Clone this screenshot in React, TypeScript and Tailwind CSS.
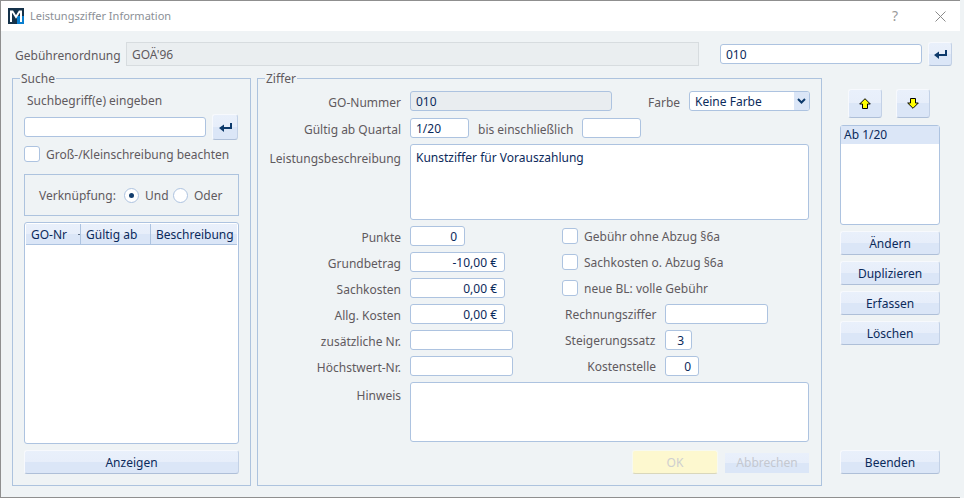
import React from "react";

const btnBg = "bg-[linear-gradient(to_bottom,#e9f0fb_0%,#e7eefa_50%,#dbe6f7_50%,#dbe6f7_100%)]";
const btn = `flex items-center justify-center rounded-[3px] border border-[#f7f9fd] border-b-[#aebfd8] border-r-[#c3d1e6] ${btnBg} text-[#0b2a5b]`;
const tbtn = `${btn} pt-[2px]`;
const box = "rounded-[3px] border border-[#adc3e0] bg-white text-[#0b2a5b] flex items-center";
const input = `${box} pt-[2px]`;
const label = "text-[#5f5a5e]";
const lbl = `${label} pt-[2px]`;
const lbl2 = `${label} pt-[4px]`;

function Logo() {
  return (
    <svg width="17" height="17" viewBox="0 0 17 17">
      <rect x="0" y="0" width="16" height="16" fill="#15324a" />
      <rect x="9" y="8" width="7" height="8" fill="#0a7fcf" />
      <path d="M3 14V3.5h1.5L8 9l3.5-5.5H13V14" fill="none" stroke="#fff" strokeWidth="2" />
    </svg>
  );
}

function Enter() {
  return (
    <svg width="13" height="9" viewBox="0 0 13 9">
      <path d="M11 0h2v6H5v3L0 5l5-3.5V4h6z" fill="#0d3a6b" />
    </svg>
  );
}

function Arrow({ up }: { up?: boolean }) {
  return (
    <svg width="12" height="11" viewBox="0 0 12 11" className={up ? "" : "rotate-180"}>
      <path d="M6 .7l5.3 5.3H8.5v4.5h-5V6H.7z" fill="#ffff00" stroke="#000" strokeWidth="1" strokeLinejoin="miter" />
    </svg>
  );
}

function Chevron() {
  return (
    <svg width="9" height="6" viewBox="0 0 9 6">
      <path d="M1 1l3.5 3.5L8 1" fill="none" stroke="#0d3a6b" strokeWidth="2" />
    </svg>
  );
}

function Check({ text }: { text: string }) {
  return (
    <div className="flex h-[16px] items-center">
      <span className="h-[16px] w-[16px] rounded-[3px] border border-[#adc3e0] bg-white" />
      <span className={`ml-[6px] ${lbl}`}>{text}</span>
    </div>
  );
}

function Row({ name, children, top = 6 }: { name: string; children?: React.ReactNode; top?: number }) {
  return (
    <div className="flex h-[20px] items-center" style={{ marginTop: top }}>
      <span className={`w-[143px] shrink-0 text-right ${lbl2}`}>{name}</span>
      <div className="ml-[9px] flex items-center">{children}</div>
    </div>
  );
}

function Num({ w, children }: { w: number; children?: React.ReactNode }) {
  return (
    <div className={`${input} h-[20px] justify-end pr-[7px]`} style={{ width: w }}>
      {children}
    </div>
  );
}

function Legend({ children }: { children: React.ReactNode }) {
  return <span className={`absolute left-[7px] top-[-6px] bg-[#eff3f5] px-[1px] leading-[12px] ${label}`}>{children}</span>;
}

export default function App() {
  return (
    <div className="h-[498px] w-[964px] overflow-hidden bg-[#eff3f5] font-['Noto_Sans',sans-serif] text-[12px] leading-[16px]">
      <div className="flex h-[498px] w-[960px] flex-col border-l border-t border-b border-[#8f8f8f] bg-[#eff3f5]">
        <div className="flex h-[30px] shrink-0 items-center bg-white pl-[7px]">
          <Logo />
          <span className="ml-[5px] text-[11px] text-[#8b8f96]">Leistungsziffer Information</span>
          <span className="ml-auto text-[14px] text-[#9a9a9a]">?</span>
          <svg width="11" height="11" viewBox="0 0 11 11" className="ml-[37px] mr-[14px]">
            <path d="M.5.5l10 10M10.5.5l-10 10" stroke="#8a8a8a" fill="none" />
          </svg>
        </div>

        <div className="mt-[11px] flex h-[24px] shrink-0 items-center pl-[14px]">
          <span className={`w-[111px] ${lbl2}`}>Gebührenordnung</span>
          <div className="flex h-[24px] w-[573px] items-center border border-[#d7dcdf] bg-[#eaeef0] pl-[5px] pt-[2px] text-[#5f5a5e]">GOÄ'96</div>
          <div className={`${input} ml-[21px] h-[20px] w-[202px] pl-[5px]`}>010</div>
          <div className={`${btn} ml-[6px] h-[24px] w-[24px]`}><Enter /></div>
        </div>

        <div className="mt-[12px] flex flex-1 pl-[11px]">
          <div className="relative flex h-[408px] w-[239px] flex-col border border-[#adc3de] pl-[11px] pr-[11px]">
            <Legend>Suche</Legend>
            <span className={`ml-[3px] mt-[14px] ${label}`}>Suchbegriff(e) eingeben</span>
            <div className="mt-[5px] flex items-center">
              <div className={`${input} h-[20px] w-[182px]`} />
              <div className={`${btn} ml-[6px] h-[26px] w-[26px]`}><Enter /></div>
            </div>
            <div className="mt-[6px]"><Check text="Groß-/Kleinschreibung beachten" /></div>
            <div className="mt-[12px] flex h-[42px] w-[215px] shrink-0 items-center border border-[#adc3de] pl-[14px]">
              <span className={`w-[85px] shrink-0 ${lbl}`}>Verknüpfung:</span>
              <span className="flex h-[15px] w-[15px] shrink-0 items-center justify-center rounded-full border border-[#adc3e0] bg-white">
                <span className="h-[5px] w-[5px] rounded-full bg-[#123e6e]" />
              </span>
              <span className={`ml-[6px] w-[22px] shrink-0 ${lbl}`}>Und</span>
              <span className="ml-[6px] h-[15px] w-[15px] shrink-0 rounded-full border border-[#adc3e0] bg-white" />
              <span className={`ml-[6px] ${lbl}`}>Oder</span>
            </div>
            <div className="mt-[6px] flex h-[222px] w-[215px] shrink-0 flex-col rounded-[3px] border border-[#adc3e0] bg-white px-[1px] pt-[1px]">
              <div className={`flex h-[21px] border-b border-[#adc3e0] text-[#0b2a5b] ${btnBg}`}>
                <span className="relative w-[55px] border-r border-[#adc3e0] pl-[5px] leading-[21px]">
                  GO-Nr
                  <span className="absolute right-0 top-[10px] h-[1px] w-[2px] bg-[#5f6f85]" />
                </span>
                <span className="w-[70px] border-r border-[#adc3e0] pl-[5px] leading-[21px]">Gültig ab</span>
                <span className="flex-1 pl-[5px] leading-[21px]">Beschreibung</span>
              </div>
            </div>
            <div className={`${tbtn} mt-[6px] h-[24px] w-[215px]`}>Anzeigen</div>
          </div>

          <div className="relative ml-[6px] flex h-[408px] w-[565px] flex-col border border-[#adc3de] pr-[12px]">
            <Legend>Ziffer</Legend>
            <Row name="GO-Nummer" top={12}>
              <div className="flex h-[20px] w-[202px] items-center rounded-[3px] border border-[#adc3e0] bg-[#e9edf0] pl-[5px] pt-[2px] text-[#0b2a5b]">010</div>
              <span className={`ml-[36px] ${lbl2}`}>Farbe</span>
              <div className={`${input} ml-[9px] h-[20px] w-[121px] pl-[5px]`}>
                Keine Farbe
                <span className="-mt-[2px] ml-auto flex h-[18px] w-[15px] items-center justify-center rounded-r-[2px] bg-[#dbe6f7]"><Chevron /></span>
              </div>
            </Row>
            <Row name="Gültig ab Quartal" top={7}>
              <div className={`${input} h-[20px] w-[59px] pl-[5px]`}>1/20</div>
              <span className={`ml-[9px] w-[104px] ${lbl2}`}>bis einschließlich</span>
              <div className={`${input} h-[20px] w-[59px]`} />
            </Row>
            <div className="mt-[6px] flex h-[76px]">
              <span className={`w-[143px] shrink-0 pt-[7px] text-right ${label}`}>Leistungsbeschreibung</span>
              <div className="ml-[9px] h-[76px] w-[400px] rounded-[3px] border border-[#adc3e0] bg-white px-[5px] pt-[5px] text-[#0b2a5b]">Kunstziffer für Vorauszahlung</div>
            </div>

            <div className="flex">
              <div className="flex w-[304px] shrink-0 flex-col">
                <Row name="Punkte"><Num w={55}>0</Num></Row>
                <Row name="Grundbetrag"><Num w={95}>-10,00 €</Num></Row>
                <Row name="Sachkosten"><Num w={95}>0,00 €</Num></Row>
                <Row name="Allg. Kosten"><Num w={95}>0,00 €</Num></Row>
                <Row name="zusätzliche Nr."><Num w={103} /></Row>
                <Row name="Höchstwert-Nr."><Num w={103} /></Row>
              </div>
              <div className="flex flex-col pt-[8px]">
                <Check text="Gebühr ohne Abzug §6a" />
                <div className="mt-[10px]"><Check text="Sachkosten o. Abzug §6a" /></div>
                <div className="mt-[10px]"><Check text="neue BL: volle Gebühr" /></div>
                <div className="mt-[8px] flex h-[20px] items-center">
                  <span className={`ml-[3px] w-[100px] ${lbl}`}>Rechnungsziffer</span>
                  <div className={`${input} h-[20px] w-[103px]`} />
                </div>
                <div className="mt-[6px] flex h-[20px] items-center">
                  <span className={`ml-[3px] w-[100px] ${lbl}`}>Steigerungssatz</span>
                  <div className={`${input} h-[20px] w-[27px] justify-end pr-[7px]`}>3</div>
                </div>
                <div className="mt-[6px] flex h-[20px] items-center">
                  <span className={`w-[94px] text-right ${lbl}`}>Kostenstelle</span>
                  <div className={`${input} ml-[9px] h-[20px] w-[34px] justify-end pr-[7px]`}>0</div>
                </div>
              </div>
            </div>

            <div className="mt-[6px] flex h-[60px]">
              <span className={`w-[143px] shrink-0 pt-[6px] text-right ${label}`}>Hinweis</span>
              <div className="ml-[9px] h-[60px] w-[400px] rounded-[3px] border border-[#adc3e0] bg-white" />
            </div>

            <div className="mt-[8px] flex items-start pl-[374px]">
              <div className="flex h-[24px] w-[86px] items-center justify-center rounded-[3px] border border-[#f7f9f0] border-b-[#d9d7bb] bg-[#fdf8cf] pt-[2px] text-[#cfcfcf]">OK</div>
              <div className={`ml-[7px] mt-[3px] flex h-[20px] w-[84px] items-center justify-center ${btnBg} text-[#c4c8d0]`}>Abbrechen</div>
            </div>
          </div>

          <div className="ml-[18px] flex w-[100px] flex-col">
            <div className="mt-[11px] flex pl-[8px]">
              <div className={`${btn} h-[29px] w-[34px]`}><Arrow up /></div>
              <div className={`${btn} ml-[14px] h-[29px] w-[34px]`}><Arrow /></div>
            </div>
            <div className="mt-[7px] h-[100px] rounded-[3px] border border-[#adc3e0] bg-white">
              <div className="h-[18px] bg-[#dbe6f7] pl-[3px] leading-[18px] text-[#0b2a5b]">Ab 1/20</div>
            </div>
            <div className={`${tbtn} mt-[6px] h-[24px]`}>Ändern</div>
            <div className={`${tbtn} mt-[6px] h-[24px]`}>Duplizieren</div>
            <div className={`${tbtn} mt-[6px] h-[24px]`}>Erfassen</div>
            <div className={`${tbtn} mt-[6px] h-[24px]`}>Löschen</div>
            <div className={`${tbtn} mt-[105px] h-[24px]`}>Beenden</div>
          </div>
        </div>
      </div>
    </div>
  );
}
